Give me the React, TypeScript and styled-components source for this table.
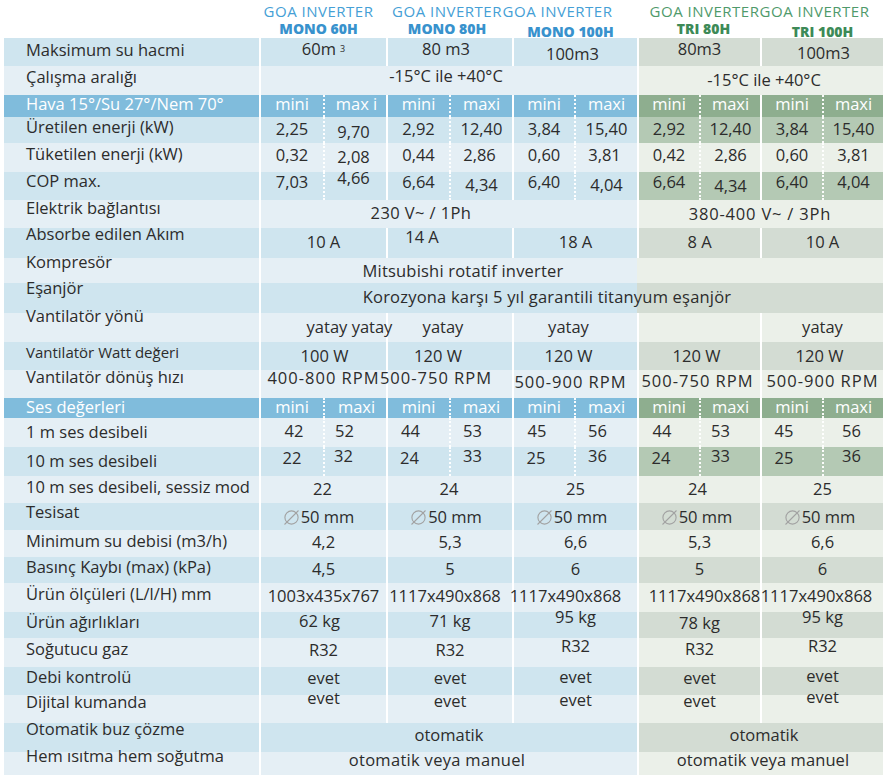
import React from 'react';
import styled, { createGlobalStyle } from 'styled-components';

type Tone = 'b' | 'g';
type Shade = 'dark' | 'light' | 'head';
type Edge = 'solid' | 'dotted' | 'none';

const COLS = '255px 64px 63px 63px 63px 62px 63px 62px 61px 62px 61px';

const PALETTE: Record<Tone, Record<Shade | 'hi', string>> = {
  b: { dark: '#cfe5ef', light: '#e5eff5', head: '#80bcdc', hi: '#cfe5ef' },
  g: { dark: '#d3dcd3', light: '#ebf0e9', head: '#8eae8f', hi: '#b4c9b4' },
};

const GlobalStyle = createGlobalStyle`
  html, body { margin: 0; padding: 0; background: #ffffff; }
  body {
    font-family: "Open Sans", "Liberation Sans", sans-serif;
    color: #2c2c2c;
  }
`;

const Page = styled.div`
  width: 879px;
  padding-left: 4px;
`;

const Heads = styled.div`
  display: grid;
  grid-template-columns: ${COLS};
  height: 38px;
`;

const ModelHead = styled.div<{ $tone: Tone }>`
  grid-column: span 2;
  display: flex;
  flex-direction: column;
  align-items: center;
  padding-top: 3px;
  white-space: nowrap;
  color: ${(p) => (p.$tone === 'b' ? '#45a0d6' : '#4f9a6b')};
`;

const Series = styled.span<{ $dx: number }>`
  font-size: 15px;
  line-height: 17px;
  letter-spacing: 0.5px;
  transform: translateX(${(p) => p.$dx}px);
`;

const Model = styled.span<{ $tone: Tone; $dx: number; $dy: number }>`
  font-size: 14px;
  font-weight: 800;
  line-height: 17px;
  color: ${(p) => (p.$tone === 'b' ? '#3892cd' : '#3d8a57')};
  transform: translate(${(p) => p.$dx}px, ${(p) => p.$dy}px);
`;

const Table = styled.div`
  display: flex;
  flex-direction: column;
`;

const Row = styled.div<{ $h: number }>`
  display: grid;
  grid-template-columns: ${COLS};
  height: ${(p) => p.$h}px;
`;

const Label = styled.div<{ $shade: Shade; $size: number }>`
  background: ${(p) => PALETTE.b[p.$shade]};
  color: ${(p) => (p.$shade === 'head' ? '#ffffff' : '#2c2c2c')};
  font-size: ${(p) => p.$size}px;
  display: flex;
  align-items: center;
  padding-left: 22px;
  white-space: nowrap;
`;

const Cell = styled.div<{ $span: number; $bg: string; $edge: Edge; $head: boolean; $ls: number }>`
  grid-column: span ${(p) => p.$span};
  background: ${(p) => p.$bg};
  border-left: ${(p) =>
    p.$edge === 'solid'
      ? '2px solid #ffffff'
      : p.$edge === 'dotted'
      ? '2px dotted rgba(255,255,255,0.95)'
      : 'none'};
  color: ${(p) => (p.$head ? '#ffffff' : '#2c2c2c')};
  font-size: 16.5px;
  letter-spacing: ${(p) => p.$ls}px;
  display: flex;
  align-items: center;
  justify-content: center;
  white-space: nowrap;
  min-width: 0;
`;

const Text = styled.span<{ $dx: number; $dy: number }>`
  display: inline-flex;
  align-items: center;
  line-height: 1;
  transform: translate(${(p) => p.$dx}px, ${(p) => p.$dy}px);
`;

const Sup = styled.sup`
  font-size: 9px;
  margin-left: 4px;
  vertical-align: 6px;
  line-height: 0;
`;

const DiamIcon = styled.svg`
  width: 17px;
  height: 17px;
  margin-right: 1px;
  flex: none;
`;

const Diam = () => (
  <DiamIcon viewBox="0 0 17 17">
    <circle cx="8.5" cy="8.5" r="6.6" fill="none" stroke="#a2a2a2" strokeWidth="1.1" />
    <line x1="1.5" y1="15.5" x2="15.5" y2="1.5" stroke="#a2a2a2" strokeWidth="1.1" />
  </DiamIcon>
);

type CellSpec = {
  tone: Tone;
  t: React.ReactNode;
  s: number;
  edge: Edge;
  dx: number;
  dy: number;
  hi?: boolean;
  bg?: string;
  ls?: number;
};

type RowSpec = {
  label: React.ReactNode;
  h: number;
  shade: Shade;
  ldy: number;
  lsize?: number;
  cells: CellSpec[];
};

const one = (tone: Tone, t: React.ReactNode, dx = 0, dy = 0, ls = 0): CellSpec => ({
  tone,
  t,
  s: 2,
  edge: 'solid',
  dx,
  dy,
  ls,
});

const span = (
  tone: Tone,
  s: number,
  t: React.ReactNode,
  dx = 0,
  dy = 0,
  ls = 0,
  edge: Edge = 'solid'
): CellSpec => ({
  tone,
  t,
  s,
  edge,
  dx,
  dy,
  ls,
});

type V = [React.ReactNode, number, number];

const pair = (tone: Tone, a: V, b: V, hi = false): CellSpec[] => [
  { tone, t: a[0], s: 1, edge: 'solid', dx: a[1], dy: a[2], hi },
  { tone, t: b[0], s: 1, edge: 'dotted', dx: b[1], dy: b[2], hi },
];

const headPairs = (first: string, dy: number): CellSpec[] => [
  ...pair('b', ['mini', 0, dy], [first, 1, dy]),
  ...pair('b', ['mini', 0, dy], ['maxi', 0, dy]),
  ...pair('b', ['mini', 0, dy], ['maxi', 0, dy]),
  ...pair('g', ['mini', 0, dy], ['maxi', 0, dy]),
  ...pair('g', ['mini', 0, dy], ['maxi', 0, dy]),
];

const diam = (
  <>
    <Diam />
    50 mm
  </>
);

const ROWS: RowSpec[] = [
  {
    label: 'Maksimum su hacmi',
    h: 28,
    shade: 'dark',
    ldy: -2,
    cells: [
      one('b', <>60m<Sup>3</Sup></>, 0, -3),
      one('b', '80 m3', -4, -3),
      one('b', '100m3', -3, 2),
      one('g', '80m3', 0, -3),
      one('g', '100m3', 1, 1),
    ],
  },
  {
    label: 'Çalışma aralığı',
    h: 29,
    shade: 'light',
    ldy: -3,
    cells: [span('b', 6, '-15°C ile +40°C', -3, -4), span('g', 4, '-15°C ile +40°C', 3, 0)],
  },
  { label: 'Hava 15°/Su 27°/Nem 70°', h: 22, shade: 'head', ldy: -2, cells: headPairs('max i', -2) },
  {
    label: 'Üretilen enerji (kW)',
    h: 26,
    shade: 'dark',
    ldy: -3,
    cells: [
      ...pair('b', ['2,25', 0, -1], ['9,70', -2, 2]),
      ...pair('b', ['2,92', 0, -1], ['12,40', 0, -1]),
      ...pair('b', ['3,84', 0, -1], ['15,40', 0, -1]),
      ...pair('g', ['2,92', 0, -1], ['12,40', 0, -1], true),
      ...pair('g', ['3,84', 0, -1], ['15,40', 0, -1], true),
    ],
  },
  {
    label: 'Tüketilen enerji (kW)',
    h: 29,
    shade: 'light',
    ldy: -3,
    cells: [
      ...pair('b', ['0,32', 0, -2], ['2,08', -2, 0]),
      ...pair('b', ['0,44', 0, -2], ['2,86', -2, -2]),
      ...pair('b', ['0,60', 0, -2], ['3,81', -2, -2]),
      ...pair('g', ['0,42', 0, -2], ['2,86', 0, -2]),
      ...pair('g', ['0,60', 0, -2], ['3,81', 0, -2]),
    ],
  },
  {
    label: 'COP max.',
    h: 28,
    shade: 'dark',
    ldy: -5,
    cells: [
      ...pair('b', ['7,03', 0, -4], ['4,66', -2, -8]),
      ...pair('b', ['6,64', 0, -4], ['4,34', 0, -1]),
      ...pair('b', ['6,40', 0, -4], ['4,04', 0, -1]),
      ...pair('g', ['6,64', 0, -4], ['4,34', 0, 0], true),
      ...pair('g', ['6,40', 0, -4], ['4,04', 0, -4], true),
    ],
  },
  {
    label: 'Elektrik bağlantısı',
    h: 28,
    shade: 'light',
    ldy: -6,
    cells: [span('b', 6, '230 V~ / 1Ph', -28, -1, 0.4), span('g', 4, '380-400 V~ / 3Ph', -1, 0, 0.8)],
  },
  {
    label: 'Absorbe edilen Akım',
    h: 30,
    shade: 'dark',
    ldy: -9,
    cells: [
      one('b', '10 A', 0, -1),
      one('b', '14 A', -28, -6),
      one('b', '18 A', 0, -1),
      one('g', '8 A', 0, -1),
      one('g', '10 A', 0, -1),
    ],
  },
  {
    label: 'Kompresör',
    h: 25,
    shade: 'light',
    ldy: -8,
    cells: [span('b', 6, 'Mitsubishi rotatif inverter', 14, 1, 0.2), span('g', 4, '', 0, 0, 0, 'none')],
  },
  {
    label: 'Eşanjör',
    h: 30,
    shade: 'dark',
    ldy: -10,
    cells: [
      {
        tone: 'b',
        t: 'Korozyona karşı 5 yıl garantili titanyum eşanjör',
        s: 10,
        edge: 'solid',
        dx: -25,
        dy: -1,
        ls: 0.2,
        bg: `linear-gradient(90deg, ${PALETTE.b.dark} 376px, ${PALETTE.g.dark} 376px)`,
      },
    ],
  },
  {
    label: 'Vantilatör yönü',
    h: 29,
    shade: 'light',
    ldy: -11,
    cells: [
      one('b', 'yatay  yatay', 26, 0),
      one('b', 'yatay', -7, 0),
      one('b', 'yatay', -7, 0),
      one('g', '', 0, 0),
      one('g', 'yatay', 0, 0),
    ],
  },
  {
    label: 'Vantilatör Watt değeri',
    h: 28,
    shade: 'dark',
    ldy: -4,
    lsize: 15,
    cells: [
      one('b', '100 W', 1, 0),
      one('b', '120 W', -12, 0),
      one('b', '120 W', -7, 0),
      one('g', '120 W', -3, 0),
      one('g', '120 W', -3, 0),
    ],
  },
  {
    label: 'Vantilatör dönüş hızı',
    h: 28,
    shade: 'light',
    ldy: -7,
    cells: [
      one('b', '400-800 RPM', 0, -6, 1),
      one('b', '500-750 RPM', -14, -6, 1),
      one('b', '500-900 RPM', -5, -2, 1),
      one('g', '500-750 RPM', -2, -3, 1),
      one('g', '500-900 RPM', 0, -3, 1),
    ],
  },
  { label: 'Ses değerleri', h: 20, shade: 'head', ldy: -1, cells: headPairs('maxi', -1) },
  {
    label: '1 m ses desibeli',
    h: 29,
    shade: 'light',
    ldy: 0,
    cells: [
      ...pair('b', ['42', 2, -1], ['52', -11, -1]),
      ...pair('b', ['44', -8, -1], ['53', -9, -1]),
      ...pair('b', ['45', -7, -1], ['56', -9, -1]),
      ...pair('g', ['44', -7, -1], ['53', -10, -1]),
      ...pair('g', ['45', -8, -1], ['56', -2, -1]),
    ],
  },
  {
    label: '10 m ses desibeli',
    h: 29,
    shade: 'dark',
    ldy: 0,
    cells: [
      ...pair('b', ['22', 0, -3], ['32', -12, -5]),
      ...pair('b', ['24', -9, -3], ['33', -9, -5]),
      ...pair('b', ['25', -8, -3], ['36', -9, -5]),
      ...pair('g', ['24', -8, -3], ['33', -10, -5], true),
      ...pair('g', ['25', -8, -3], ['36', -2, -5], true),
    ],
  },
  {
    label: '10 m ses desibeli, sessiz mod',
    h: 27,
    shade: 'light',
    ldy: -2,
    cells: [
      one('b', '22', -1, 0),
      one('b', '24', -1, 0),
      one('b', '25', 0, 0),
      one('g', '24', -2, 0),
      one('g', '25', 0, 0),
    ],
  },
  {
    label: 'Tesisat',
    h: 27,
    shade: 'dark',
    ldy: -4,
    cells: [
      one('b', diam, -5, 1),
      one('b', diam, -4, 1),
      one('b', diam, -4, 1),
      one('g', diam, -3, 1),
      one('g', diam, -3, 1),
    ],
  },
  {
    label: 'Minimum su debisi (m3/h)',
    h: 27,
    shade: 'light',
    ldy: -2,
    cells: [
      one('b', '4,2', 0, -1),
      one('b', '5,3', 0, -1),
      one('b', '6,6', 0, -1),
      one('g', '5,3', 0, -1),
      one('g', '6,6', 0, -1),
    ],
  },
  {
    label: 'Basınç Kaybı (max) (kPa)',
    h: 26,
    shade: 'dark',
    ldy: -3,
    cells: [
      one('b', '4,5', 0, -1),
      one('b', '5', 0, -1),
      one('b', '6', 0, -1),
      one('g', '5', 0, -1),
      one('g', '6', 0, -1),
    ],
  },
  {
    label: 'Ürün ölçüleri (L/l/H) mm',
    h: 29,
    shade: 'light',
    ldy: -3,
    cells: [
      one('b', '1003x435x767', 0, -1),
      one('b', '1117x490x868', -5, -1),
      one('b', '1117x490x868', -10, -1),
      one('g', '1117x490x868', 5, -1),
      one('g', '1117x490x868', -6, -1),
    ],
  },
  {
    label: 'Ürün ağırlıkları',
    h: 26,
    shade: 'dark',
    ldy: -3,
    cells: [
      one('b', '62 kg', -4, -4),
      one('b', '71 kg', 0, -4),
      one('b', '95 kg', 0, -8),
      one('g', '78 kg', 0, -2),
      one('g', '95 kg', 0, -8),
    ],
  },
  {
    label: 'Soğutucu gaz',
    h: 29,
    shade: 'light',
    ldy: -3,
    cells: [
      one('b', 'R32', 0, -2),
      one('b', 'R32', 0, -2),
      one('b', 'R32', 0, -6),
      one('g', 'R32', 0, -3),
      one('g', 'R32', 0, -6),
    ],
  },
  {
    label: 'Debi kontrolü',
    h: 28,
    shade: 'dark',
    ldy: -4,
    cells: [
      one('b', 'evet', 0, -3),
      one('b', 'evet', 0, -3),
      one('b', 'evet', 0, -4),
      one('g', 'evet', 0, -3),
      one('g', 'evet', 0, -5),
    ],
  },
  {
    label: 'Dijital kumanda',
    h: 28,
    shade: 'light',
    ldy: -7,
    cells: [
      one('b', 'evet', 0, -11),
      one('b', 'evet', 0, -8),
      one('b', 'evet', 0, -9),
      one('g', 'evet', 0, -8),
      one('g', 'evet', 0, -12),
    ],
  },
  {
    label: 'Otomatik buz çözme',
    h: 29,
    shade: 'dark',
    ldy: -8,
    cells: [span('b', 6, 'otomatik', 0, -2), span('g', 4, 'otomatik', 3, -2)],
  },
  {
    label: 'Hem ısıtma hem soğutma',
    h: 23,
    shade: 'light',
    ldy: -7,
    cells: [
      span('b', 6, 'otomatik veya manuel', -12, -3, 0.3),
      span('g', 4, 'otomatik veya manuel', 2, -3, 0.1),
    ],
  },
];

const HEADS: { tone: Tone; model: string; sdx: number; mdx: number; mdy: number }[] = [
  { tone: 'b', model: 'MONO 60H', sdx: -4, mdx: -4, mdy: 0 },
  { tone: 'b', model: 'MONO 80H', sdx: -2, mdx: -2, mdy: 0 },
  { tone: 'b', model: 'MONO 100H', sdx: -17, mdx: -4, mdy: 3 },
  { tone: 'g', model: 'TRI 80H', sdx: 6, mdx: 5, mdy: 0 },
  { tone: 'g', model: 'TRI 100H', sdx: -7, mdx: 1, mdy: 3 },
];

const bgOf = (c: CellSpec, shade: Shade) => c.bg ?? (c.hi ? PALETTE[c.tone].hi : PALETTE[c.tone][shade]);

export default function App() {
  return (
    <>
      <GlobalStyle />
      <Page>
        <Heads>
          <span />
          {HEADS.map((h) => (
            <ModelHead key={h.model} $tone={h.tone}>
              <Series $dx={h.sdx}>GOA INVERTER</Series>
              <Model $tone={h.tone} $dx={h.mdx} $dy={h.mdy}>
                {h.model}
              </Model>
            </ModelHead>
          ))}
        </Heads>
        <Table>
          {ROWS.map((r, i) => (
            <Row key={i} $h={r.h}>
              <Label $shade={r.shade} $size={r.lsize ?? 16.5}>
                <Text $dx={0} $dy={r.ldy}>
                  {r.label}
                </Text>
              </Label>
              {r.cells.map((c, j) => (
                <Cell
                  key={j}
                  $span={c.s}
                  $bg={bgOf(c, r.shade)}
                  $edge={c.edge}
                  $head={r.shade === 'head'}
                  $ls={c.ls ?? 0}
                >
                  <Text $dx={c.dx} $dy={c.dy}>
                    {c.t}
                  </Text>
                </Cell>
              ))}
            </Row>
          ))}
        </Table>
      </Page>
    </>
  );
}
